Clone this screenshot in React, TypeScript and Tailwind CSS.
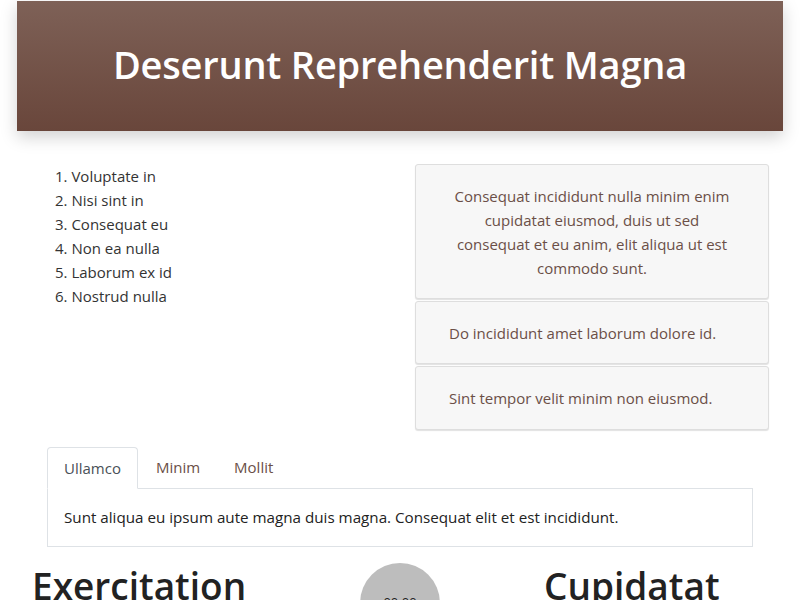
import React from 'react';

const font = { fontFamily: '"Open Sans", "Noto Sans", sans-serif' };

const items = ['Voluptate in', 'Nisi sint in', 'Consequat eu', 'Non ea nulla', 'Laborum ex id', 'Nostrud nulla'];

export default function App() {
  return (
    <div className="bg-white text-[#333] min-h-[600px] overflow-hidden" style={font}>
      {/* Header */}
      <header className="mx-[17px] mt-px h-[130px] flex items-center justify-center pb-[3px] bg-gradient-to-b from-[#7e6157] to-[#69463b] shadow-[0_6px_16px_rgba(0,0,0,0.18)]">
        <h1 className="text-[38px] font-semibold text-white tracking-[-0.2px]">Deserunt Reprehenderit Magna</h1>
      </header>

      {/* List + cards */}
      <div className="flex mt-[33px] pl-[55px] pr-[31px]">
        <ol className="w-[360px] text-[15px] leading-6">
          {items.map((it, i) => (
            <li key={it}>
              {i + 1}. {it}
            </li>
          ))}
        </ol>
        <div className="w-[354px] flex flex-col gap-[2px] text-[15px] leading-6 text-[#6b4f47]">
          <div className="bg-[#f7f7f7] border border-[#dedede] rounded-[3px] shadow-[0_1px_1px_rgba(0,0,0,0.12)] h-[135px] px-[36px] flex items-center justify-center text-center">
            Consequat incididunt nulla minim enim cupidatat eiusmod, duis ut sed consequat et eu anim, elit aliqua ut est commodo sunt.
          </div>
          <div className="bg-[#f7f7f7] border border-[#dedede] rounded-[3px] shadow-[0_1px_1px_rgba(0,0,0,0.12)] h-[63px] px-[33px] flex items-center">
            Do incididunt amet laborum dolore id.
          </div>
          <div className="bg-[#f7f7f7] border border-[#dedede] rounded-[3px] shadow-[0_1px_1px_rgba(0,0,0,0.12)] h-[64px] px-[33px] flex items-center">
            Sint tempor velit minim non eiusmod.
          </div>
        </div>
      </div>

      {/* Tabs */}
      <div className="mx-[47px] mt-[17px] w-[706px]">
        <div className="flex border-b border-[#dee2e6] h-[42px] text-[15px]">
          <div className="px-4 flex items-center border border-[#dee2e6] border-b-white -mb-px rounded-t-[4px] bg-white text-[#495057]">
            Ullamco
          </div>
          <div className="px-[18px] flex items-center text-[#6b4f47]">Minim</div>
          <div className="px-4 flex items-center text-[#6b4f47]">Mollit</div>
        </div>
        <div className="border border-t-0 border-[#dee2e6] h-[58px] px-4 flex items-center text-[15.2px] text-[#222]">
          Sunt aliqua eu ipsum aute magna duis magna. Consequat elit et est incididunt.
        </div>
      </div>

      {/* Bottom */}
      <div className="flex items-start mt-4 pl-[32px]">
        <h2 className="w-[328px] text-[37px] font-semibold text-[#222] leading-[1.2] mt-[1px]">Exercitation</h2>
        <div className="w-[80px] h-[80px] rounded-full bg-[#bdbdbd] flex items-center justify-center text-[13px] text-[#222]">
          00:00
        </div>
        <h2 className="ml-[104px] text-[37px] font-semibold text-[#222] leading-[1.2] mt-[1px]">Cupidatat</h2>
      </div>
    </div>
  );
}
